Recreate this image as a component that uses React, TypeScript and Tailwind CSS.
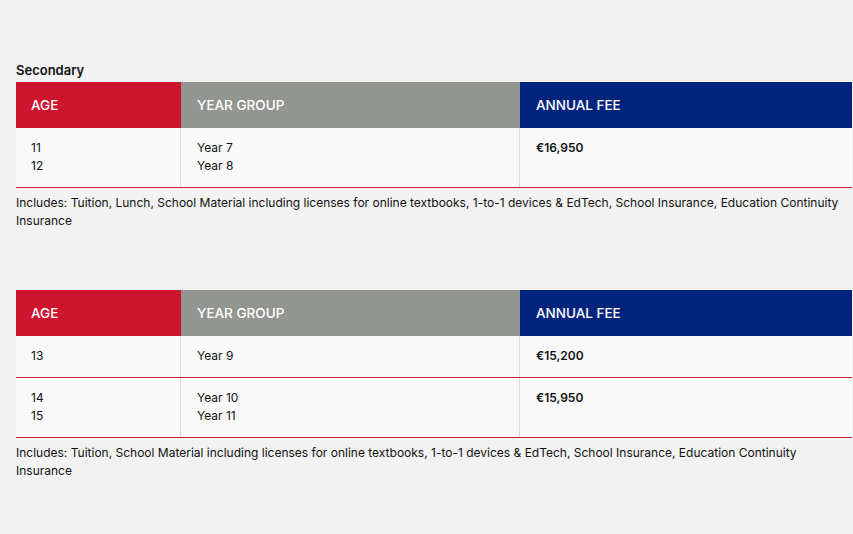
type Row = { ages: string[]; years: string[]; fee: string };

function FeeTable({ rows }: { rows: Row[] }) {
  return (
    <div className="w-full">
      <div className="grid grid-cols-[165px_339px_1fr] h-[46px] text-[13.5px] font-medium text-white uppercase">
        <div className="bg-[#cd1530] flex items-center pl-[15px]">Age</div>
        <div className="bg-[#939590] flex items-center pl-[16px]">Year Group</div>
        <div className="bg-[#03247c] flex items-center pl-[16px]">Annual Fee</div>
      </div>
      {rows.map((r, i) => (
        <div key={i}>
          <div className="grid grid-cols-[165px_339px_1fr] bg-[#f9f9f9] text-[12px] leading-[18px] text-[#111]">
            <div className="pl-[15px] pt-[11px] pb-[12px] border-r border-r-[#dcdcdc]">
              {r.ages.map((a) => (
                <div key={a}>{a}</div>
              ))}
            </div>
            <div className="pl-[16px] pt-[11px] pb-[12px] border-r border-r-[#dcdcdc]">
              {r.years.map((y) => (
                <div key={y}>{y}</div>
              ))}
            </div>
            <div className="pl-[16px] pt-[11px] pb-[12px] font-semibold">{r.fee}</div>
          </div>
          <div className="h-px bg-[#cc2338]" />
        </div>
      ))}
    </div>
  );
}

export default function App() {
  return (
    <div
      className="min-h-[534px] bg-[#f2f2f2] pl-4 pr-px pt-[62px] pb-10 text-[#111]"
      style={{ fontFamily: "Inter, 'Noto Sans', sans-serif" }}
    >
      <h3 className="text-[13px] leading-4 font-semibold mb-1">Secondary</h3>
      <FeeTable rows={[{ ages: ["11", "12"], years: ["Year 7", "Year 8"], fee: "€16,950" }]} />
      <p className="text-[12px] leading-[18px] mt-[6px]">
        Includes: Tuition, Lunch, School Material including licenses for online textbooks, 1-to-1 devices &amp; EdTech, School Insurance, Education Continuity Insurance
      </p>

      <div className="mt-[60px]">
        <FeeTable
          rows={[
            { ages: ["13"], years: ["Year 9"], fee: "€15,200" },
            { ages: ["14", "15"], years: ["Year 10", "Year 11"], fee: "€15,950" },
          ]}
        />
      </div>
      <p className="text-[12px] leading-[18px] mt-[6px]">
        Includes: Tuition, School Material including licenses for online textbooks, 1-to-1 devices &amp; EdTech, School Insurance, Education Continuity Insurance
      </p>
    </div>
  );
}
